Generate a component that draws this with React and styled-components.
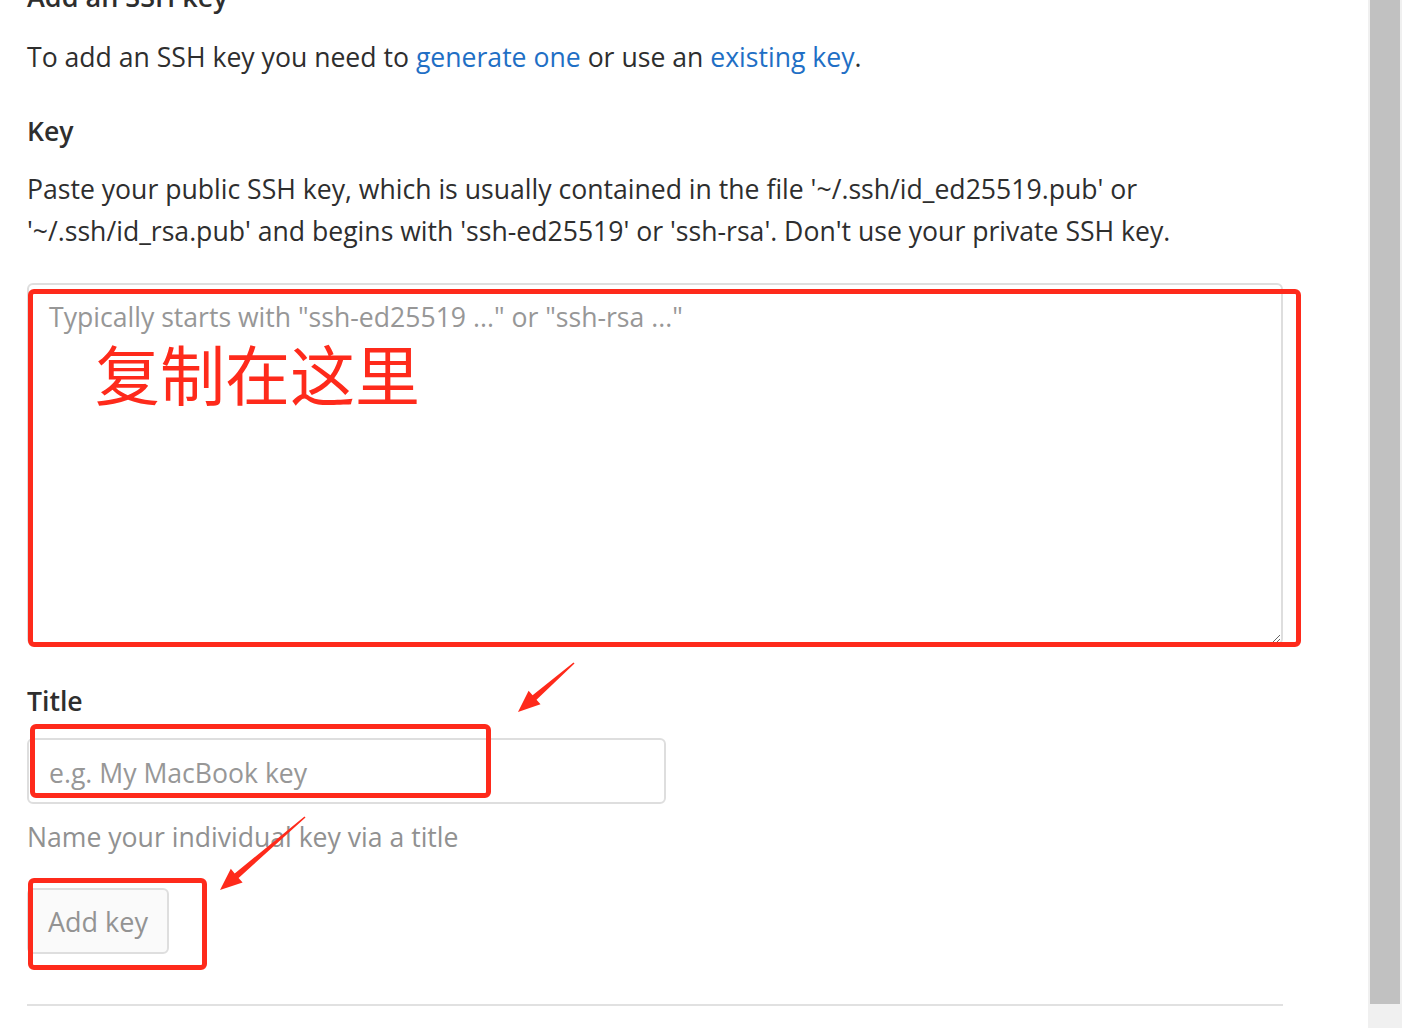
import React from "react";
import styled, { createGlobalStyle } from "styled-components";

const GlobalStyle = createGlobalStyle`
  html, body {
    margin: 0;
    padding: 0;
    background: #fff;
    overflow: hidden;
  }
  body {
    font-family: "Open Sans", "Noto Sans CJK SC", sans-serif;
    color: #2e2e2e;
  }
`;

const red = "#fe2a1b";

const Screen = styled.div`
  display: flex;
  width: 1402px;
  height: 1028px;
  overflow: hidden;
`;

const Main = styled.main`
  position: relative;
  flex: 1;
  padding-left: 27px;
`;

const Content = styled.div`
  width: 1256px;
`;

const Heading = styled.h3`
  margin: -21px 0 0;
  font-size: 27px;
  font-weight: 600;
  line-height: 36px;
`;

const Text = styled.p`
  margin: ${(p) => p.$mt || 0}px 0 0;
  font-size: 26.6px;
  line-height: 42px;
`;

const Link = styled.a`
  color: #1f6fc5;
  text-decoration: none;
`;

const Label = styled.label`
  display: block;
  margin-top: ${(p) => p.$mt}px;
  font-size: 26.6px;
  font-weight: 600;
  line-height: 36px;
`;

const Field = styled.div`
  position: relative;
  margin-top: ${(p) => p.$mt}px;
  width: ${(p) => p.$w}px;
`;

const TextArea = styled.textarea`
  display: block;
  box-sizing: border-box;
  width: 100%;
  height: 362px;
  padding: 14px 20px;
  border: 2px solid #dedede;
  border-radius: 6px;
  font-family: inherit;
  font-size: 26.6px;
  line-height: 36px;
  resize: vertical;
  outline: none;

  &::placeholder {
    color: #979797;
  }
`;

const Input = styled.input`
  display: block;
  box-sizing: border-box;
  width: 100%;
  height: 66px;
  padding: 4px 20px 0;
  border: 2px solid #dedede;
  border-radius: 6px;
  font-family: inherit;
  font-size: 26.6px;
  outline: none;

  &::placeholder {
    color: #979797;
  }
`;

const Help = styled.p`
  margin: 12px 0 0;
  color: #919191;
  font-size: 26.6px;
  line-height: 42px;
`;

const Button = styled.button`
  display: block;
  box-sizing: border-box;
  width: 142px;
  height: 66px;
  padding: 0;
  border: 2px solid #dedede;
  border-radius: 6px;
  background: #fafafa;
  color: #939393;
  font-family: inherit;
  font-size: 27px;
  white-space: nowrap;
  cursor: default;
`;

const Divider = styled.hr`
  margin: 50px 0 0;
  border: none;
  border-top: 2px solid #e1e1e1;
`;

const Mark = styled.div`
  position: absolute;
  left: ${(p) => p.$l}px;
  top: ${(p) => p.$t}px;
  width: ${(p) => p.$w}px;
  height: ${(p) => p.$h}px;
  box-sizing: border-box;
  border: 5px solid ${red};
  border-radius: 6px;
  pointer-events: none;
`;

const Note = styled.span`
  position: absolute;
  left: 68px;
  top: 57px;
  color: ${red};
  font-family: "Noto Sans CJK SC", sans-serif;
  font-size: 65px;
  line-height: 1;
  pointer-events: none;
`;

const Arrows = styled.svg`
  position: absolute;
  left: 0;
  top: 0;
  pointer-events: none;
`;

const Scrollbar = styled.div`
  width: 34px;
  height: 100%;
  background: #f0f0f0;
  padding: 0 2px;
  box-sizing: border-box;
`;

const Thumb = styled.div`
  height: 1004px;
  background: #c1c1c1;
`;

// tapered arrow from tail to tip
const arrowPoints = (tx, ty, hx, hy) => {
  const dx = hx - tx;
  const dy = hy - ty;
  const len = Math.hypot(dx, dy);
  const ux = dx / len;
  const uy = dy / len;
  const nx = -uy;
  const ny = ux;
  const headLen = 22;
  const bx = hx - ux * headLen;
  const by = hy - uy * headLen;
  const pts = [
    [tx + nx * 0.8, ty + ny * 0.8],
    [bx + nx * 3, by + ny * 3],
    [bx + nx * 9, by + ny * 9],
    [hx, hy],
    [bx - nx * 9, by - ny * 9],
    [bx - nx * 3, by - ny * 3],
    [tx - nx * 0.8, ty - ny * 0.8],
  ];
  return pts.map((p) => p.map((v) => v.toFixed(1)).join(",")).join(" ");
};

const App = () => {
  return (
    <>
      <GlobalStyle />
      <Screen>
        <Main>
          <Content>
            <Heading>Add an SSH key</Heading>
            <Text $mt={21}>
              To add an SSH key you need to <Link href="#">generate one</Link>{" "}
              or use an <Link href="#">existing key</Link>.
            </Text>
            <Label $mt={35}>Key</Label>
            <Text $mt={19}>
              Paste your public SSH key, which is usually contained in the file
              '~/.ssh/id_ed25519.pub' or '~/.ssh/id_rsa.pub' and begins with
              'ssh-ed25519' or 'ssh-rsa'. Don't use your private SSH key.
            </Text>
            <Field $mt={31} $w={1256}>
              <TextArea placeholder={'Typically starts with "ssh-ed25519 ..." or "ssh-rsa ..."'} />
              <Note>复制在这里</Note>
              <Mark $l={1} $t={6} $w={1273} $h={358} />
            </Field>
            <Label $mt={38}>Title</Label>
            <Field $mt={19} $w={639}>
              <Input placeholder="e.g. My MacBook key" />
              <Mark $l={3} $t={-14} $w={461} $h={74} />
            </Field>
            <Help>Name your individual key via a title</Help>
            <Field $mt={30} $w={142}>
              <Button>Add key</Button>
              <Mark $l={1} $t={-10} $w={179} $h={92} />
            </Field>
            <Divider />
          </Content>
          <Arrows width="1368" height="1028" viewBox="0 0 1368 1028">
            <polygon points={arrowPoints(574, 663, 518, 712)} fill={red} />
            <polygon points={arrowPoints(305, 817, 220, 890)} fill={red} />
          </Arrows>
        </Main>
        <Scrollbar>
          <Thumb />
        </Scrollbar>
      </Screen>
    </>
  );
};

export default App;
